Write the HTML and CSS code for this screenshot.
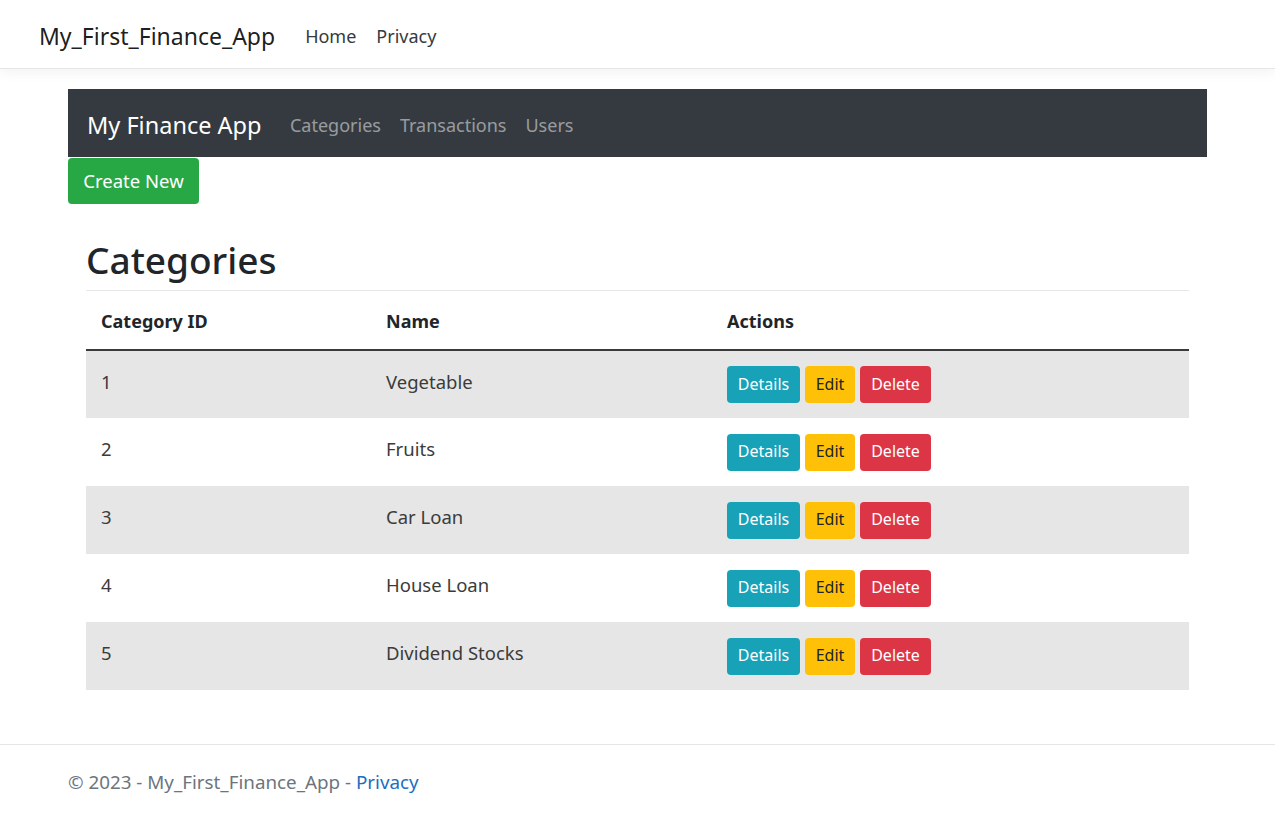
FILE: index.html
```html
<!DOCTYPE html>
<html lang="en">
<head>
<meta charset="utf-8">
<title>Categories - My_First_Finance_App</title>
<link rel="stylesheet" href="styles.css">
</head>
<body>
<header class="site-header">
  <a class="site-brand" href="#">My_First_Finance_App</a>
  <nav class="site-nav">
    <a href="#">Home</a>
    <a href="#">Privacy</a>
  </nav>
</header>

<main class="container">
  <nav class="app-nav">
    <a class="app-brand" href="#">My Finance App</a>
    <a class="app-link" href="#">Categories</a>
    <a class="app-link" href="#">Transactions</a>
    <a class="app-link" href="#">Users</a>
  </nav>
  <div class="toolbar">
    <a class="btn-create" href="#">Create New</a>
  </div>
  <section class="content">
    <h1 class="page-title">Categories</h1>
    <table class="data-table">
      <colgroup>
        <col class="c-id"><col class="c-name"><col class="c-actions">
      </colgroup>
      <thead>
        <tr><th>Category ID</th><th>Name</th><th>Actions</th></tr>
      </thead>
      <tbody>
        <tr><td>1</td><td>Vegetable</td><td class="actions"><a class="btn btn-info">Details</a><a class="btn btn-warning">Edit</a><a class="btn btn-danger">Delete</a></td></tr>
        <tr><td>2</td><td>Fruits</td><td class="actions"><a class="btn btn-info">Details</a><a class="btn btn-warning">Edit</a><a class="btn btn-danger">Delete</a></td></tr>
        <tr><td>3</td><td>Car Loan</td><td class="actions"><a class="btn btn-info">Details</a><a class="btn btn-warning">Edit</a><a class="btn btn-danger">Delete</a></td></tr>
        <tr><td>4</td><td>House Loan</td><td class="actions"><a class="btn btn-info">Details</a><a class="btn btn-warning">Edit</a><a class="btn btn-danger">Delete</a></td></tr>
        <tr><td>5</td><td>Dividend Stocks</td><td class="actions"><a class="btn btn-info">Details</a><a class="btn btn-warning">Edit</a><a class="btn btn-danger">Delete</a></td></tr>
      </tbody>
    </table>
  </section>
</main>

<footer class="site-footer">
  <div class="footer-inner">© 2023 - My_First_Finance_App - <a href="#">Privacy</a></div>
</footer>
</body>
</html>
```

FILE: styles.css
```css
* { box-sizing: border-box; }
html, body { margin: 0; padding: 0; }
body {
  font-family: "Noto Sans", "Open Sans", sans-serif;
  color: #212529;
  background: #fff;
  font-size: 18px;
}
a { text-decoration: none; }

.site-header {
  height: 69px;
  display: flex;
  align-items: center;
  padding: 4px 0 0 39px;
  border-bottom: 1px solid #e6e6e6;
  box-shadow: 0 4px 12px rgba(0,0,0,.05);
}
.site-brand {
  font-size: 23px;
  color: rgba(0,0,0,.9);
  margin-right: 20px;
}
.site-nav { display: flex; }
.site-nav a {
  color: #343a40;
  font-size: 18px;
  padding: 0 10px;
}

.container {
  width: 1139px;
  margin: 20px auto 0;
}
.app-nav {
  height: 68px;
  background: #343a40;
  display: flex;
  align-items: center;
  padding: 3px 0 0 19px;
}
.app-brand {
  color: #fff;
  font-size: 23.5px;
  margin-right: 19px;
}
.app-link {
  color: rgba(255,255,255,.5);
  font-size: 18px;
  padding: 0 9.5px;
}
.toolbar { display: flex; padding-top: 1px; }
.btn-create {
  background: #28a745;
  color: #fff;
  font-size: 18.5px;
  height: 46px;
  width: 131px;
  display: flex;
  align-items: center;
  justify-content: center;
  border-radius: 4px;
  padding-bottom: 1px;
}

.content { padding: 0 18px; }
.page-title {
  font-size: 37px;
  font-weight: 500;
  margin: 29px 0 0;
  line-height: 54px;
  border-bottom: 1px solid #e8e8e8;
  height: 58px;
}
.data-table {
  width: 100%;
  border-collapse: collapse;
  table-layout: fixed;
}
.c-id { width: 285px; }
.c-name { width: 341px; }
.data-table th {
  text-align: left;
  font-weight: 700;
  font-size: 18px;
  height: 59px;
  padding: 1px 15px 0;
  border-bottom: 2px solid #3a3a3a;
  vertical-align: middle;
}
.data-table td {
  height: 68px;
  padding: 0 15px 7px;
  font-size: 18.5px;
  color: #3b3b3b;
  vertical-align: middle;
}
.data-table tbody tr:nth-child(odd) { background: #e6e6e6; }
.data-table td.actions { padding-top: 0; padding-bottom: 0; }
.actions { white-space: nowrap; }
.btn {
  display: inline-flex;
  align-items: center;
  justify-content: center;
  height: 37px;
  padding: 0 10px 2px;
  margin-right: 5px;
  font-size: 16px;
  border-radius: 4px;
  color: #fff;
  vertical-align: middle;
}
.btn-info { background: #17a2b8; width: 73px; }
.btn-warning { background: #ffc107; color: #212529; width: 50px; }
.btn-danger { background: #dc3545; width: 71px; }

.site-footer {
  margin-top: 54px;
  border-top: 1px solid #e6e6e6;
  height: 73px;
}
.footer-inner {
  padding: 24px 0 0 68px;
  font-size: 18.8px;
  color: #6c757d;
}
.footer-inner a { color: #1b6ec2; }
```
